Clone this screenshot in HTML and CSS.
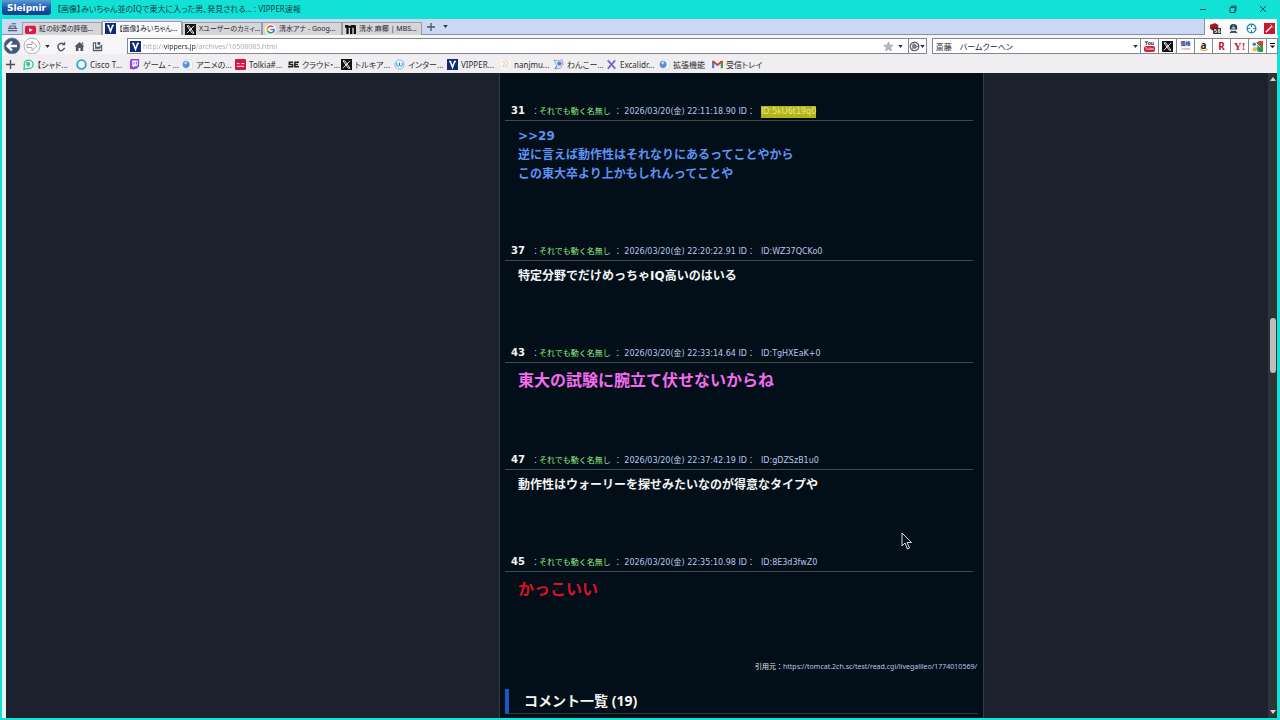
FILE: index.html
```html
<!DOCTYPE html>
<html lang="ja">
<head>
<meta charset="utf-8">
<title>VIPPER速報</title>
<link rel="stylesheet" href="styles.css">
</head>
<body>
<svg class="defs" aria-hidden="true">
  <symbol id="v" viewBox="0 0 12 12"><path fill="#102a78" d="M0 0h12v12H0z"/><path fill="none" stroke="#fff" stroke-width="1.700" d="M3.500 2.500L6 9l2.500-6.500M2.300 2.800h2.400M7.500 2.800h2.300"/></symbol>
  <symbol id="x" viewBox="0 0 12 12"><path fill="#111" d="M0 0h12v12H0z"/><path fill="none" stroke="#fff" d="M2.200 2h2l5.600 8h-2zM9.800 2L2.200 10"/></symbol>
  <symbol id="globe" viewBox="0 0 12 12"><path fill="#f8f8fa" stroke="#c8ccd6" stroke-width=".5" d="M4 1h5l2.500 2v8H4z"/><circle cx="4.500" cy="6" r="3.800" fill="#5b8fd8"/><path fill="#c5dcf8" d="M2 4.500q2-2.500 4-1.500L4.500 6z"/></symbol>
  <symbol id="down" viewBox="0 0 6 4"><path d="M0 0h6L3 4z"/></symbol>
</svg>
<div class="window">
  <header class="titlebar">
    <button class="logo">Sleipnir</button>
    <h1 class="title">【画像】みいちゃん並のIQで東大に入った男、発見される... : VIPPER速報</h1>
    <div class="controls">
      <button aria-label="最小化"><svg viewBox="0 0 8 8"><path d="M1 4.500h6"/></svg></button>
      <button aria-label="元に戻す"><svg viewBox="0 0 8 8"><path d="M1 2.500h5v5H1zM2.500 2.500V1H7v5H6"/></svg></button>
      <button aria-label="閉じる"><svg viewBox="0 0 8 8"><path d="M1 1l6 6M7 1L1 7"/></svg></button>
    </div>
  </header>

  <nav class="tabs">
    <button class="tabmenu" aria-label="タブ一覧"><svg class="ico" viewBox="0 0 12 12"><path fill="none" stroke="#526075" stroke-width="1.200" d="M1 10.500h10M3 8V5.500h6V8M1 8h10M5 3h5"/></svg></button>
    <button class="tab"><svg class="ico" viewBox="0 0 12 12"><rect y="2" width="12" height="9" rx="2" fill="#df1745"/><path fill="#fff" d="M4.500 4.300v4.400l4-2.200z"/></svg><span>紅の砂漠の評価...</span></button>
    <button class="tab active"><svg class="ico"><use href="#v"/></svg><span>【画像】みいちゃん...</span></button>
    <button class="tab"><svg class="ico"><use href="#x"/></svg><span>Xユーザーのカミィ...</span></button>
    <button class="tab"><svg class="ico" viewBox="0 0 12 12"><circle cx="6" cy="6" r="6" fill="#fff"/><g fill="none" stroke-width="1.800"><path stroke="#e94436" d="M2.500 4.500Q5 .8 9 3"/><path stroke="#f5b90a" d="M2.500 4.300q-.8 1.700.2 3.600"/><path stroke="#32a455" d="M2.700 7.700Q5 11 8.500 9"/><path stroke="#3c7be0" d="M6 6h4q0 2-1.600 3.200"/></g></svg><span>清水アナ - Goog...</span></button>
    <button class="tab"><svg class="ico" viewBox="0 0 12 12"><path fill="#111" d="M0 1h3l1 1h2l1-1h4l1 1v9H9.500V4H8v7H5.500V4H4v7H1.500V4H0z"/></svg><span>清水 麻椰 | MBS...</span></button>
    <button class="newtab" aria-label="新しいタブ"><svg viewBox="0 0 8 8"><path d="M4 0v8M0 4h8" stroke="#4b5363" stroke-width="1.300"/></svg></button>
    <button class="caret" aria-label="閉じたタブ"><svg><use href="#down"/></svg></button>
    <div class="ext">
      <button aria-label="ブロック"><svg class="ico" viewBox="0 0 12 12"><path fill="#a81424" d="M0 2l3-1 2-1 2 1 2 1v6H2L0 6z"/><path fill="#222" d="M3.500 5.500H12V12H3.500z"/><path fill="none" stroke="#fff" stroke-width=".9" d="M7 7H5v1.500h2v2H5M11 7H9v3.500h2v-2H9"/></svg></button>
      <button aria-label="スクリプト"><svg class="ico" viewBox="0 0 12 12"><path fill="#273347" d="M2 5q0-4 4-4t4 4v2H2zM1.500 11.500L4 8h4l2.500 3.500L8 10.500H4z"/><circle cx="6" cy="7" r="2.600" fill="#d9e4ee"/><path stroke="#273347" d="M3 6.500h6M4 9.500h4"/><circle cx="6" cy="3" r="1.200" fill="#3b96c4"/></svg></button>
      <button aria-label="ターゲット"><svg class="ico" viewBox="0 0 12 12"><circle cx="6" cy="6" r="4.700" fill="#fff" stroke="#268bb3" stroke-width="1.500"/><path stroke="#268bb3" stroke-width="1.200" d="M6 1v3.500M6 7.500V11M1 6h3.500M7.500 6H11"/></svg></button>
      <button aria-label="ツール"><svg class="ico" viewBox="0 0 12 12"><path fill="#c9162b" d="M0 0h12v12H0z"/><path stroke="#fff" stroke-width="1.500" d="M2 10l7-7"/><path stroke="#fff" stroke-width=".7" d="M7 1.500l1 1M10 4.500l1 1"/></svg></button>
    </div>
  </nav>

  <div class="toolbar">
    <button class="round back" aria-label="戻る"><svg viewBox="0 0 18 18"><circle cx="9" cy="9" r="8" fill="#435779" stroke="#7a8aa5"/><path fill="none" stroke="#fff" stroke-width="2.400" d="M14 9H5M9 4.500L4.500 9 9 13.500"/></svg></button>
    <button class="round" aria-label="進む"><svg viewBox="0 0 18 18"><circle cx="9" cy="9" r="8" fill="#fafafa" stroke="#aeb0b8"/><path fill="#fff" stroke="#a3a5ad" d="M4 7.500h5V4.500L14 9l-5 4.500v-3H4z"/></svg></button>
    <button class="caret" aria-label="履歴"><svg><use href="#down"/></svg></button>
    <button class="nav" aria-label="更新"><svg class="ico" viewBox="0 0 12 12"><path fill="none" stroke="#4d5a69" stroke-width="1.600" d="M8 3Q5 1.500 3 4T3.500 9.500 9.500 7.500"/><path fill="#4d5a69" d="M6 4.500h4V.5z"/></svg></button>
    <button class="nav" aria-label="ホーム"><svg class="ico" viewBox="0 0 12 12"><path fill="#4d5a69" d="M6 1l5.500 5H10v5H7V7.500H5V11H2V6H.5zM8.500 1.500H10V4L8.500 3z"/></svg></button>
    <button class="nav" aria-label="保存"><svg class="ico" viewBox="0 0 12 12"><path fill="none" stroke="#4d5a69" stroke-width="1.200" d="M1.500 2v8.500h9V4M1.500 2H4v5h5V5"/><path fill="#4d5a69" d="M6 1h3v3H6zM3 8h6v1H3z"/></svg></button>
    <div class="address">
      <svg class="ico"><use href="#v"/></svg>
      <input class="url" type="text" aria-label="アドレス" value="http://vippers.jp/archives/10508085.html">
      <button aria-label="お気に入り"><svg class="ico" viewBox="0 0 12 12"><path fill="#b6b9bf" stroke="#8a8e96" stroke-width=".6" d="M6 1l1.400 3.500 3.800.2-3 2.400 1 3.700L6 8.700l-3.200 2.100 1-3.700-3-2.400 3.800-.2z"/></svg></button>
      <button class="caret fav" aria-label="お気に入り一覧"><svg><use href="#down"/></svg></button>
      <div class="engine"><button aria-label="エンジン"><svg class="ico" viewBox="0 0 12 12"><circle cx="6" cy="6" r="4.700" fill="#eee" stroke="#4c5360" stroke-width="1.200"/><circle cx="6" cy="6" r="2" fill="#8c949f" stroke="#4c5360"/><path stroke="#4c5360" stroke-width=".7" d="M6 1L4 5M11 6H8M3 10l2-3"/></svg></button><button class="caret" aria-label="エンジン一覧"><svg><use href="#down"/></svg></button></div>
    </div>
    <div class="search">
      <input type="text" aria-label="検索" value="斎藤　バームクーヘン">
      <button class="caret" aria-label="検索履歴"><svg><use href="#down"/></svg></button>
    </div>
    <div class="sites">
      <button class="yt" aria-label="YouTube"><b>You</b><i>Tube</i></button>
      <button aria-label="X"><svg class="ico"><use href="#x"/></svg></button>
      <button class="kakaku" aria-label="価格.com"><b>価格</b><i>.com</i></button>
      <button aria-label="Amazon" class="amazon">a<svg viewBox="0 0 10 3"><path d="M1 .5q4 2.500 8 0" fill="none" stroke="#eba52f"/></svg></button>
      <button aria-label="楽天" class="rakuten">R</button>
      <button aria-label="Yahoo" class="yahoo">Y!</button>
      <button aria-label="Google"><svg class="ico" viewBox="0 0 12 12"><path fill="#269b45" d="M5 1h7v11H7z"/><path fill="#e33b32" d="M7 0h5v5H7z"/><circle cx="2.500" cy="3.500" r="2" fill="#3f7be0"/><path fill="#3f7be0" d="M5 6l3 3-2 3z"/><circle cx="3" cy="9" r="2.500" fill="#f2c02b"/><path stroke="#fff" d="M5 3l4 4"/></svg></button>
      <button class="more" aria-label="その他"><svg viewBox="0 0 6 7"><path d="M0 0h6v1H0zM0 3h6L3 6z"/></svg></button>
    </div>
  </div>

  <nav class="bookmarks">
    <button class="add" aria-label="追加"><svg viewBox="0 0 10 10"><path d="M5 0v10M0 5h10" stroke="#434b55" stroke-width="1.500"/></svg></button>
    <a href="#"><svg class="ico" viewBox="0 0 12 12"><path fill="#fff" stroke="#40c79b" stroke-width="1.500" d="M1 11l.6-3Q.5 1.500 6 1.200q5 .3 5 4.800-.4 5-6 4.500z"/><path fill="#40c79b" d="M4 3h3l1 3-2 3-3-3z"/></svg><span>【シャド...</span></a>
    <a href="#"><svg class="ico" viewBox="0 0 12 12"><circle cx="6" cy="6" r="4.700" fill="#fff" stroke="#1fa6c9" stroke-width="2"/></svg><span>Cisco T...</span></a>
    <a href="#"><svg class="ico" viewBox="0 0 12 12"><path fill="#8b45e6" d="M2 0h9v8l-3 3H6l-2 1v-1H1V3z"/><path fill="#fff" d="M3.500 1.500h6v5L8 8H6L4.500 9.500V8h-1z"/><path stroke="#8b45e6" d="M5.500 3v3M8 3v3"/></svg><span>ゲーム - ...</span></a>
    <a href="#"><svg class="ico"><use href="#globe"/></svg><span>アニメの...</span></a>
    <a href="#"><svg class="ico" viewBox="0 0 12 12"><rect width="12" height="12" rx="1" fill="#d21741"/><path stroke="#fff" d="M2 5h3M7 5h3M2 8h8"/></svg><span>Tolkia#...</span></a>
    <a href="#"><svg class="ico" viewBox="0 0 12 12"><path fill="none" stroke="#222" stroke-width="1.700" d="M5.500 3.500h-4V6h3.500v2.500H0M12 3.500H7.500v5H12M8 6h3"/></svg><span>クラウド・...</span></a>
    <a href="#"><svg class="ico"><use href="#x"/></svg><span>トルキア...</span></a>
    <a href="#"><svg class="ico" viewBox="0 0 12 12"><circle cx="6" cy="6" r="5" fill="#eff9ff" stroke="#6eb8d9"/><path fill="none" stroke="#3388bd" d="M3 4v3q1.500 2 3 0V4v3q1.500 2 3 0V4"/></svg><span>インター...</span></a>
    <a href="#"><svg class="ico"><use href="#v"/></svg><span>VIPPER...</span></a>
    <a href="#"><svg class="ico" viewBox="0 0 12 12"><path fill="#faf5ef" d="M1 1h10v10H1z"/><path fill="none" stroke="#e0b9a0" stroke-width=".8" d="M3 2l2 3-2 4M5 2q5 0 3 4L5 9M7 7l2 3"/></svg><span>nanjmu...</span></a>
    <a href="#"><svg class="ico" viewBox="0 0 12 12"><path fill="#dbe9fa" stroke="#7089ab" stroke-width=".7" d="M1 1l4 1 5-1 1 5-3 4-5 1 1-4z"/><circle cx="7" cy="5" r="2.400" fill="#5b86c5"/><path stroke="#3f5e90" d="M2 11l2-3"/></svg><span>わんこー...</span></a>
    <a href="#"><svg class="ico" viewBox="0 0 12 12"><path stroke="#7265d8" stroke-width="2" d="M2 1.500l8 9M10 1.500l-8 9"/><path stroke="#a9a0f0" d="M1 2l2-1M9 11l2-1"/></svg><span>Excalidr...</span></a>
    <a href="#"><svg class="ico"><use href="#globe"/></svg><span>拡張機能</span></a>
    <a class="last" href="#"><svg class="ico" viewBox="0 0 12 12"><path fill="#3e82e5" d="M0 2h2.500v8H0z"/><path fill="#36a455" d="M9.500 2H12v8H9.500z"/><path fill="none" stroke="#dc3e35" stroke-width="2" d="M1 2.500l5 4 5-4"/></svg><span>受信トレイ</span></a>
  </nav>

  <div class="viewport">
    <main class="page">
      <section class="column">
        <article class="post"><header><b>31</b><span class="sep">：</span><span class="name">それでも動く名無し</span><span class="meta">： <time>2026/03/20(金) 22:11:18.90</time> ID：</span><mark>ID:5kU6t19q0</mark></header><p class="blue">&gt;&gt;29<br>逆に言えば動作性はそれなりにあるってことやから<br>この東大卒より上かもしれんってことや</p></article>
        <article class="post"><header><b>37</b><span class="sep">：</span><span class="name">それでも動く名無し</span><span class="meta">： <time>2026/03/20(金) 22:20:22.91</time> ID：</span><span>ID:WZ37QCKo0</span></header><p>特定分野でだけめっちゃIQ高いのはいる</p></article>
        <article class="post"><header><b>43</b><span class="sep">：</span><span class="name">それでも動く名無し</span><span class="meta">： <time>2026/03/20(金) 22:33:14.64</time> ID：</span><span>ID:TgHXEaK+0</span></header><p class="large pink">東大の試験に腕立て伏せないからね</p></article>
        <article class="post"><header><b>47</b><span class="sep">：</span><span class="name">それでも動く名無し</span><span class="meta">： <time>2026/03/20(金) 22:37:42.19</time> ID：</span><span>ID:gDZSzB1u0</span></header><p>動作性はウォーリーを探せみたいなのが得意なタイプや</p></article>
        <article class="post"><header><b>45</b><span class="sep">：</span><span class="name">それでも動く名無し</span><span class="meta">： <time>2026/03/20(金) 22:35:10.98</time> ID：</span><span>ID:8E3d3fwZ0</span></header><p class="large red">かっこいい</p></article>
        <p class="source">引用元：<a href="#">https://tomcat.2ch.sc/test/read.cgi/livegalileo/1774010569/</a></p>
        <h2 class="comments">コメント一覧 (19)</h2>
      </section>
    </main>
    <div class="scroll" aria-hidden="true">
      <svg viewBox="0 0 6 4"><path d="M0 4h6L3 0z"/></svg>
      <div class="track"><div class="thumb"></div></div>
      <svg viewBox="0 0 6 4"><path d="M0 0h6L3 4z"/></svg>
    </div>
  </div>
  <svg class="pointer" viewBox="0 0 12 18" aria-hidden="true"><path fill="#071018" stroke="#d8dde0" d="M1 1v13l3-3 2.500 6 2-1L6 10.500h4.500z"/></svg>
</div>
</body>
</html>
```
FILE: styles.css
```css
* { box-sizing: border-box; }
body { margin: 0; background: #12e2d6; }
body, button, input { font-family: "Noto Sans", "Noto Sans CJK JP", sans-serif; font-size: 8px; color: #25272c; }
button { display: flex; align-items: center; justify-content: center; flex: none; margin: 0; padding: 0; border: 0; background: none; font-feature-settings: inherit; }
input { min-width: 0; padding: 0; border: 0; outline: 0; background: none; }
svg { display: block; flex: none; }
.defs { display: none; }
.ico { width: 11px; height: 11px; }
.window { display: flex; flex-direction: column; height: 100vh; overflow: hidden; }

.titlebar { display: flex; height: 19px; flex: none; padding-left: 2px; }
.logo { width: 49px; height: 15px; border-radius: 0 0 3px 3px; background: linear-gradient(#5d9bd6, #1b5cae 50%, #0a3a85); color: #fff; font-family: "DejaVu Sans", sans-serif; font-weight: bold; font-size: 9px; }
.title { flex: 1; margin: 0; padding-left: 6px; font-size: 8px; font-weight: normal; line-height: 18px; white-space: nowrap; font-feature-settings: "palt"; color: #123f44; }
.controls { display: flex; padding-right: 2px; }
.controls button { width: 30px; height: 18px; }
.controls svg { width: 8px; height: 8px; fill: none; stroke: #164b4d; stroke-width: 1; }

.tabs { display: flex; flex: none; height: 16px; margin: 0 3px 0 2px; background: #cbd8f3; border-bottom: 1px solid #8e919b; font-feature-settings: "palt"; }
.tabmenu { width: 20px; }
.tab { width: 80px; height: 13px; margin-top: 3px; padding: 0 2px; gap: 3px; justify-content: flex-start; border: 1px solid #9a9da5; border-bottom: 0; background: #d6d5d8; font-size: 7px; }
.tab.active { height: 14px; margin-top: 2px; background: #fafafc; }
.tab span { white-space: nowrap; line-height: 12px; }
.newtab { width: 18px; }
.newtab svg { width: 8px; height: 8px; }
.caret { width: 10px; }
.caret svg { width: 5px; height: 3px; fill: #2d3038; }
.ext { display: flex; align-items: center; gap: 7px; height: 19px; margin-left: auto; padding: 0 2px 1px 5px; border-left: 1px solid #8e919b; background: #fafafa; }

.toolbar { display: flex; align-items: center; flex: none; height: 19px; margin: 0 2px; padding-top: 3px; background: #f6f6f8; }
.round { width: 20px; height: 18px; }
.round svg { width: 18px; height: 18px; }
.nav { width: 18px; height: 14px; }
.address { display: flex; align-items: center; flex: 799; gap: 2px; height: 16px; margin-left: 21px; padding-left: 2px; border: 1px solid #85878d; background: #fff; }
.url { flex: 1; font-size: 7px; background: linear-gradient(90deg, #a5a7aa 21px, #26282c 21px, #26282c 53px, #a5a7aa 53px); background-clip: text; -webkit-background-clip: text; -webkit-text-fill-color: transparent; }
.engine { display: flex; height: 14px; border-left: 1px solid #85878d; }
.engine .caret { width: 6px; }
.search { display: flex; align-items: center; flex: 208; height: 16px; margin-left: 5px; border: 1px solid #85878d; background: #fff; }
.search input { flex: 1; padding-left: 3px; font-feature-settings: "palt"; }
.sites { display: flex; height: 16px; border: 1px solid #85878d; border-left: 0; background: #fff; }
.sites button { width: 18px; border-right: 1px solid #85878d; }
.sites .more { width: 10px; border: 0; }
.more svg { width: 5px; height: 6px; }
.sites .yt, .sites .kakaku, .sites .amazon { flex-direction: column; line-height: 6px; }
.yt b, .kakaku b { font-size: 5px; line-height: 5px; }
.yt i { padding: 0 1px; border-radius: 2px; background: #d0213b; color: #fff; font-size: 4px; font-style: normal; line-height: 6px; }
.kakaku b { color: #1a2f9b; }
.kakaku i { font-size: 4px; font-style: normal; line-height: 5px; color: #c2552d; }
.sites .amazon { font-size: 10px; font-weight: bold; line-height: 8px; color: #222; }
.amazon svg { width: 10px; height: 3px; }
.rakuten { font-size: 10px; font-weight: bold; color: #bf1630; }
.yahoo { font-family: "Liberation Serif", serif; font-size: 11px; font-weight: bold; color: #d1172f; }

.bookmarks { display: flex; align-items: center; flex: none; height: 19px; margin: 0 3px 0 2px; padding-top: 1px; background: #f0eef1; font-feature-settings: "palt"; }
.bookmarks .add { width: 21px; padding-right: 4px; }
.add svg { width: 9px; height: 9px; }
.bookmarks a { display: flex; align-items: center; flex: none; gap: 3px; width: 53px; color: #2b2d31; text-decoration: none; white-space: nowrap; }
.bookmarks .last { width: auto; }

.viewport { display: flex; flex: 1; min-height: 0; margin: 0 3px 2px 2px; border-left: 4px solid #e9f5f4; background: #1c222d; }
.page { display: grid; flex: 1; min-width: 0; grid-template-columns: 493fr 485fr 284fr; overflow: hidden; }
.column { grid-column: 2; padding: 29px 5px 0; border: 1px solid #343b45; border-width: 0 1px; background: #020f18; font-family: "DejaVu Sans", "Noto Sans CJK JP", sans-serif; color: #f4f4f4; }
.post header { display: flex; align-items: baseline; height: 19px; margin-right: 5px; padding-left: 6px; border-bottom: 1px solid #45484b; color: #b9c6ea; line-height: 17px; white-space: pre; }
.post header b { width: 21px; font-size: 10px; color: #f4f4f4; }
.sep { display: flex; justify-content: center; width: 7px; }
.name { color: #93ee86; }
.meta { padding: 0 6px 0 3px; }
mark { background: #b4b414; color: #e6e79a; line-height: 12px; }
.post p { margin: 0; padding: 6px 13px 58px; font-size: 12px; font-weight: bold; line-height: 19px; }
.post .large { font-size: 16px; line-height: 24px; }
.post .blue { color: #5f92f4; }
.post .pink { color: #f56bf0; }
.post .red { color: #dc1028; }
.source { margin: 0 1px 0 0; font-family: "Noto Sans", "Noto Sans CJK JP", sans-serif; font-size: 7px; line-height: 13px; text-align: right; color: #e8e8e8; }
.source a { color: #b9c6ea; text-decoration: none; }
.comments { margin: 16px 0 0; padding-left: 15px; border-left: 4px solid #1a58c8; border-bottom: 1px solid #343b45; font-family: "Noto Sans", "Noto Sans CJK JP", sans-serif; font-size: 14px; line-height: 24px; }
.scroll { display: flex; flex-direction: column; align-items: center; width: 9px; padding: 4px 0; background: #2e3436; }
.scroll svg { width: 6px; height: 4px; fill: #d4d4d4; }
.track { display: flex; flex-direction: column; flex: 1; width: 6px; }
.track::before { content: ""; flex: 237; }
.track::after { content: ""; flex: 337; }
.thumb { flex: 55; border-radius: 3px; background: #bdbdbd; }
.pointer { position: absolute; left: 901px; top: 532px; width: 12px; height: 18px; }
```
